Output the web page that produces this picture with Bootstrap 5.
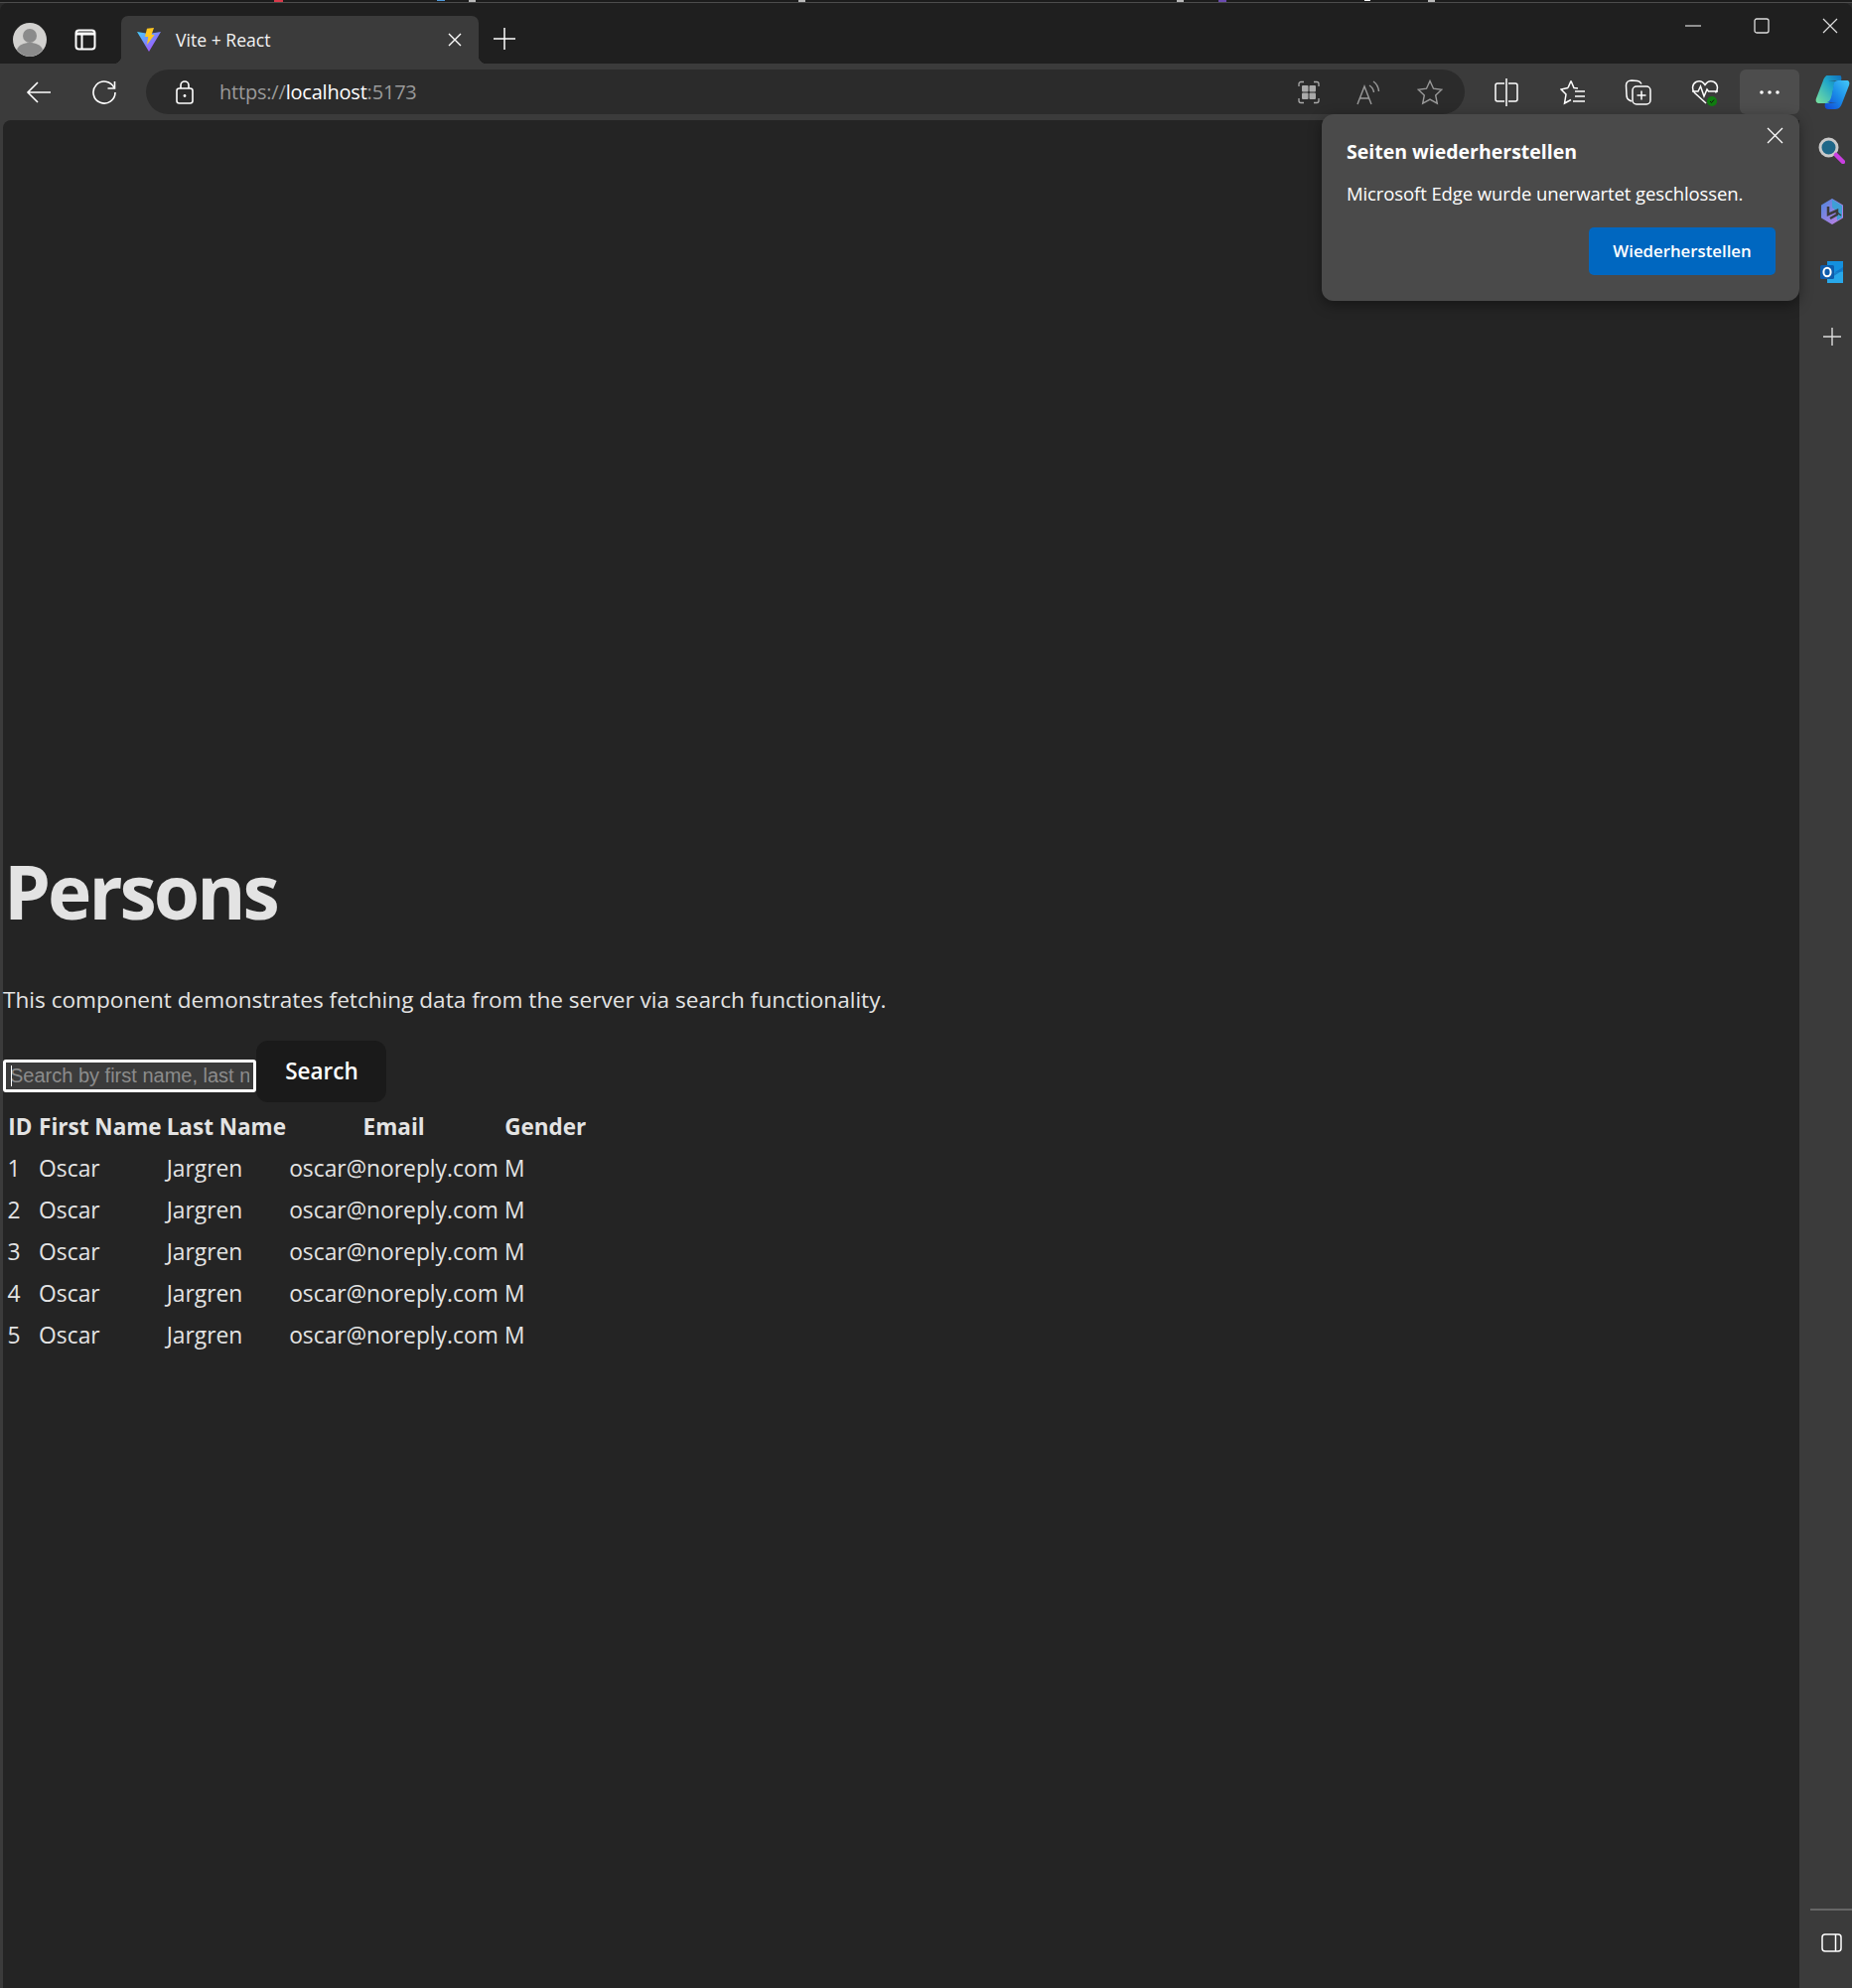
<!DOCTYPE html>
<html lang="en">
<head>
  <meta charset="UTF-8" />
  <title>Vite + React</title>
  <meta name="viewport" content="width=device-width, initial-scale=1">
  <link href="https://cdn.jsdelivr.net/npm/bootstrap@5.3.3/dist/css/bootstrap.min.css" rel="stylesheet">
  <style>
    html, body { height: 100%; background: #2a2a2a; }
    body { font-family: "Open Sans", "Noto Sans", sans-serif; color: #e3e3e3; overflow: hidden; }
    svg { display: block; }

    .win { height: 2002px; }
    .desk-strip { height: 3px; flex: none; background-color: #1c1c1c; background-repeat: no-repeat;
      background-image: linear-gradient(#d8394a, #d8394a), linear-gradient(#4f9bdc, #4f9bdc), linear-gradient(#bbb, #bbb), linear-gradient(#bbb, #bbb), linear-gradient(#bbb, #bbb), linear-gradient(#6b4bb0, #6b4bb0), linear-gradient(#fff, #fff), linear-gradient(#bbb, #bbb), linear-gradient(#4c4c4c, #4c4c4c);
      background-size: 9px 2px, 8px 1px, 7px 2px, 7px 2px, 7px 2px, 8px 2px, 6px 1px, 7px 2px, 100% 1px;
      background-position: 276px 0, 440px 0, 472px 0, 804px 0, 1185px 0, 1227px 0, 1374px 0, 1438px 0, 0 2px; }

    .title-bar { height: 61px; background: #1f1f1f; flex: none; border-radius: 8px 8px 0 0; }
    .title-left { width: 122px; height: 74px; flex: none; }
    .avatar-slot { width: 60px; padding-left: 13px; }
    .tabs-slot { width: 62px; padding-left: 15px; }
    .tab-item { width: 360px; height: 48px; margin-top: 13px; background: #3b3b3b; border-radius: 7px 7px 0 0; position: relative; padding-left: 16px; font-size: 17.6px; color: #f2f2f2; }
    .tab-item::before, .tab-item::after { content: ""; position: absolute; bottom: 0; width: 8px; height: 8px; }
    .tab-item::before { left: -8px; background: radial-gradient(circle at 0 0, #1f1f1f 8px, #3b3b3b 8.5px); }
    .tab-item::after { right: -8px; background: radial-gradient(circle at 100% 0, #1f1f1f 8px, #3b3b3b 8.5px); }
    .tab-name { margin-left: 15px; }
    .tab-x { margin-left: auto; margin-right: 17px; }
    .new-tab { margin-left: 15px; margin-top: 13px; height: 46px; }
    .win-btns { margin-left: auto; height: 46px; padding-right: 14px; gap: 53px; }

    .tool-bar { height: 57px; background: #3b3b3b; flex: none; padding-top: 6px; padding-left: 15px; }
    .tool-btn { width: 48px; height: 45px; flex: none; }
    .tool-btn + .tool-btn { margin-left: 18px; }
    .addr-bar { width: 1328px; height: 45px; margin-left: 18px; background: #2b2b2b; border-radius: 23px; padding: 0 22px 0 30px; flex: none; }
    .addr-text { margin-left: 26px; font-size: 20px; color: #9a9a9a; letter-spacing: -.2px; }
    .addr-text b { font-weight: 400; color: #fff; }
    .addr-icons { margin-left: auto; gap: 37px; }
    .ext-btn { width: 60px; height: 45px; flex: none; margin-left: 6.7px; }
    .ext-first { margin-left: 12px; }
    .more-btn { background: #4d4d4d; border-radius: 6px; margin-left: 5px; }
    .copilot-slot { width: 53px; padding-left: 15px; height: 45px; flex: none; }

    .page-row { min-height: 0; flex: 1 1 auto; background: #3b3b3b; }
    .page-area { margin-left: 3px; background: #242424; border-top-left-radius: 8px; flex: 1 1 auto; padding-top: 734px; min-width: 0; }
    .side-rail { width: 53px; flex: none; background: #3b3b3b; padding-top: 17px; }
    .rail-btn { height: 62px; padding-left: 19px; }
    .rail-shift { padding-left: 21px; }
    .rail-add { padding: 6px 0 0 24px; }
    .rail-foot { margin-top: auto; margin-left: 11px; border-top: 2px solid #666; padding: 23px 0 36px 11px; }

    .page-title { font-size: 75px; line-height: 84px; font-weight: 700; color: #e3e3e3; margin: 0 0 0 1px; letter-spacing: -3px; }
    .page-lead { font-size: 22.6px; line-height: 36px; margin: 50px 0 0; }
    .search-row { margin-top: 23px; height: 62px; }
    .search-wrap { position: relative; width: 255px; margin-top: 19px; }
    .search-wrap::before { content: ""; position: absolute; left: 8px; top: 6px; width: 1px; height: 21px; background: #fff; }
    .search-input { display: block; width: 255px; height: 33px; padding: 0 4px; background: #3b3b3b; border: 3px solid #fff; border-radius: 3px; font: 20px "Liberation Sans", Arial, sans-serif; color: #fff; outline: 0; }
    .search-input::placeholder { color: #8c8c8c; opacity: 1; }
    .search-btn { width: 131px; height: 62px; background: #1a1a1a; color: #fff; border: 0; border-radius: 12px; font-size: 22.5px; font-weight: 600; padding: 0 0 0 1px; }
    .search-btn:hover { background: #1a1a1a; color: #fff; }

    .person-table { border-collapse: separate; border-spacing: 3px; table-layout: fixed; width: 592px; margin-top: 2px; font-size: 22.8px; line-height: 36px; }
    .person-table th, .person-table td { padding: 1.5px; white-space: nowrap; }
    .person-table th { text-align: center; font-weight: 700; font-size: 22.5px; }
    .col-id { width: 28.5px; } .col-first { width: 125px; } .col-last { width: 120px; } .col-mail { width: 213px; } .col-gender { width: 85px; }

    .restore-pop { position: absolute; left: 1331px; top: 115px; width: 481px; height: 188px; background: #4a4a4a; border: 0; border-radius: 12px; box-shadow: 0 4px 14px rgba(0,0,0,.4); color: #fff; padding: 24px 24px 0 25px; }
    .restore-title { font-size: 19.5px; font-weight: 700; line-height: 28px; margin: 0; }
    .restore-text { font-size: 18.5px; line-height: 28px; margin: 14px 0 0; letter-spacing: -.1px; white-space: nowrap; }
    .restore-close { position: absolute; right: 16px; top: 13px; padding: 0; border: 0; background: none; }
    .restore-btn { width: 188px; height: 48px; background: #0067c0; border: 0; border-radius: 5px; color: #fff; font-size: 16.8px; font-weight: 600; padding: 0; }
    .restore-btn:hover { background: #0067c0; color: #fff; }
  </style>
</head>
<body>
  <div class="win d-flex flex-column position-relative">
    <div class="desk-strip"></div>

    <div class="title-bar d-flex">
      <div class="title-left d-flex align-items-center">
        <div class="avatar-slot">
          <svg width="34" height="34" viewBox="0 0 34 34"><circle cx="17" cy="17" r="17" fill="#d2d1cf"/><circle cx="17" cy="13" r="7" fill="#8b8b8b"/><path d="M4 27c2-5 7-7 13-7s11 2 13 7c-3 4-8 7-13 7S7 31 4 27z" fill="#8b8b8b"/></svg>
        </div>
        <div class="tabs-slot">
          <svg width="22" height="22" viewBox="0 0 22 22" fill="none" stroke="#fff" stroke-width="2"><rect x="1.5" y="1.5" width="19" height="19" rx="3"/><path d="M2 3.5h18v3H2z" fill="#fff" stroke="none"/><path d="M7.5 6v14"/></svg>
        </div>
      </div>
      <div class="tab-item d-flex align-items-center">
        <svg width="24" height="24" viewBox="0 0 24 24"><defs><linearGradient id="v1" x1="0" y1="0" x2="1" y2="1"><stop offset="0" stop-color="#41d1ff"/><stop offset="1" stop-color="#bd34fe"/></linearGradient></defs><path d="M0 4l12 2 12-2-12 20z" fill="url(#v1)"/><path d="M10 .8l7-.8-2.4 7h3L10 17l1.2-8H8z" fill="#ffc61f"/></svg>
        <span class="tab-name">Vite + React</span>
        <svg class="tab-x" width="14" height="14" viewBox="0 0 14 14" stroke="#fff" stroke-width="1.4"><path d="M1 1l12 12M13 1L1 13"/></svg>
      </div>
      <div class="new-tab d-flex align-items-center">
        <svg width="22" height="22" viewBox="0 0 22 22" stroke="#fff" stroke-width="1.5"><path d="M11 0v22M0 11h22"/></svg>
      </div>
      <div class="win-btns d-flex align-items-center">
        <svg width="16" height="16" viewBox="0 0 16 16" stroke="#ddd" stroke-width="1.2"><path d="M0 8h16"/></svg>
        <svg width="16" height="16" viewBox="0 0 16 16" fill="none" stroke="#ddd" stroke-width="1.3"><rect x="1" y="1" width="14" height="14" rx="2"/></svg>
        <svg width="16" height="16" viewBox="0 0 16 16" stroke="#ddd" stroke-width="1.2"><path d="M1 1l14 14M15 1L1 15"/></svg>
      </div>
    </div>

    <div class="tool-bar d-flex">
      <div class="tool-btn d-flex align-items-center justify-content-center">
        <svg width="26" height="24" viewBox="0 0 26 24" fill="none" stroke="#fff" stroke-width="1.6"><path d="M25 12H2M12 2L2 12l10 10"/></svg>
      </div>
      <div class="tool-btn d-flex align-items-center justify-content-center">
        <svg width="26" height="26" viewBox="0 0 26 26" fill="none" stroke="#fff" stroke-width="1.6"><path d="M23 8.5A11 11 0 1 0 24 13"/><path d="M23.5 2v7h-7"/></svg>
      </div>
      <div class="addr-bar d-flex align-items-center">
        <svg width="18" height="24" viewBox="0 0 18 24" fill="none" stroke="#fff" stroke-width="1.6"><rect x="1" y="8" width="16" height="15" rx="2.5"/><path d="M5 8V5a4 4 0 0 1 8 0v3"/><circle cx="9" cy="15.5" r="1.4" fill="#fff" stroke="none"/></svg>
        <span class="addr-text">https://<b>localhost</b>:5173</span>
        <div class="addr-icons d-flex align-items-center">
          <svg width="22" height="24" viewBox="0 0 22 24" fill="none" stroke="#aaa" stroke-width="1.3"><path d="M1 6V3.500A2 2 0 0 1 3 1.500h3M16 1.500h3a2 2 0 0 1 2 2V6M1 18v2.500a2 2 0 0 0 2 2h3M16 22.500h3a2 2 0 0 0 2-2V18"/><g fill="#aaa" stroke="none"><rect x="4" y="5" width="6.500" height="6.500" rx="1"/><rect x="11.500" y="5" width="6.500" height="6.500" rx="1"/><rect x="4" y="12.500" width="6.500" height="6.500" rx="1"/><rect x="11.500" y="12.500" width="6.500" height="6.500" rx="1"/></g></svg>
          <svg width="24" height="26" viewBox="0 0 24 26" fill="none" stroke="#9a9a9a" stroke-width="1.4"><path d="M1 25L8 7l7 18M3.500 19h9"/><path d="M13 6c2.500 1.500 4 3.500 4.500 7M17 2c3 2 5 5 5.500 10"/></svg>
          <svg width="26" height="26" viewBox="0 0 26 26" fill="none" stroke="#9a9a9a" stroke-width="1.4"><path d="M13 1.500l3.500 7.700 8.300 1-6.100 5.700 1.600 8.300-7.300-4.100-7.300 4.100 1.600-8.300-6.100-5.700 8.300-1z"/></svg>
        </div>
      </div>
      <div class="ext-btn ext-first d-flex align-items-center justify-content-center">
        <svg width="24" height="28" viewBox="0 0 24 28" fill="none" stroke="#fff" stroke-width="1.5"><path d="M12 0v28M10 5H3a2 2 0 0 0-2 2v14a2 2 0 0 0 2 2h7M14 5h7a2 2 0 0 1 2 2v14a2 2 0 0 1-2 2h-7"/></svg>
      </div>
      <div class="ext-btn d-flex align-items-center justify-content-center">
        <svg width="26" height="26" viewBox="0 0 26 26" fill="none" stroke="#fff" stroke-width="1.5"><path d="M11 1.500l3 7 4 .5M8 8.500L1 10l5 5-1.500 9 6.500-3.500"/><path d="M11 1.500L8 8.500"/><path d="M15 12h10M15 17h10M13 22h12"/></svg>
      </div>
      <div class="ext-btn d-flex align-items-center justify-content-center">
        <svg width="28" height="28" viewBox="0 0 28 28" fill="none" stroke="#fff" stroke-width="1.5"><path d="M7 23l-2-1c-2-1-3-3-3-5L1.500 7C1.500 4 4 2 7 2l6 .5c2 .2 3 1 4 3"/><rect x="8" y="8" width="18" height="18" rx="4"/><path d="M17 12.500v9M12.500 17h9"/></svg>
      </div>
      <div class="ext-btn d-flex align-items-center justify-content-center">
        <svg width="28" height="28" viewBox="0 0 28 28"><path d="M15 25L3.500 14.500C.5 11 1 5.500 5 3.500c3.500-1.700 7 0 9 3 2-3 5.500-4.700 9-3 4 2 4.500 7.500 1.500 11" fill="none" stroke="#fff" stroke-width="1.5"/><path d="M1 13h6l2.500-5 3.500 10 3-7 1.500 2H27" fill="none" stroke="#fff" stroke-width="1.500"/><circle cx="21" cy="23" r="5" fill="#107c10"/><path d="M19 23l1.500 1.500 2.500-3" fill="none" stroke="#111" stroke-width="1"/></svg>
      </div>
      <div class="ext-btn more-btn d-flex align-items-center justify-content-center">
        <svg width="22" height="6" viewBox="0 0 22 6" fill="#fff"><circle cx="3" cy="3" r="1.800"/><circle cx="11" cy="3" r="1.800"/><circle cx="19" cy="3" r="1.800"/></svg>
      </div>
      <div class="copilot-slot d-flex align-items-center">
        <svg width="36" height="34" viewBox="0 0 36 34"><defs><linearGradient id="c1" x1="0" y1="1" x2="1" y2="0"><stop offset="0" stop-color="#7be29d"/><stop offset=".6" stop-color="#1fa6c9"/><stop offset="1" stop-color="#0f6cbd"/></linearGradient><linearGradient id="c2" x1="0" y1="1" x2="1" y2="0"><stop offset="0" stop-color="#1146d6"/><stop offset=".5" stop-color="#1a8ce8"/><stop offset="1" stop-color="#45c9f7"/></linearGradient></defs><path d="M13 7h10c-3 1-4 4-5 9l-2 10c-.6 2-2 3-4 3H3.500C1 29 0 27 1 24L8 6c1-3 3-6 7-6h8c3 0 4 3 3 6z" fill="url(#c1)" transform="translate(1 -1)"/><path d="M23 27H13c3-1 4-4 5-9l2-10c.6-2 2-3 4-3h8.500c2.500 0 3.500 2 2.500 5l-7 18c-1 3-3 6-7 6h-7c-3 0-4-3-3-6z" fill="url(#c2)"/></svg>
      </div>
    </div>

    <div class="page-row d-flex">
      <main class="page-area">
        <h1 class="page-title">Persons</h1>
        <p class="page-lead">This component demonstrates fetching data from the server via search functionality.</p>
        <div class="search-row d-flex align-items-start">
          <div class="search-wrap">
            <input class="search-input" type="text" placeholder="Search by first name, last name or email">
          </div>
          <button class="btn search-btn" type="button">Search</button>
        </div>
        <table class="person-table">
          <colgroup><col class="col-id"><col class="col-first"><col class="col-last"><col class="col-mail"><col class="col-gender"></colgroup>
          <thead>
            <tr><th>ID</th><th>First Name</th><th>Last Name</th><th>Email</th><th>Gender</th></tr>
          </thead>
          <tbody>
            <tr><td>1</td><td>Oscar</td><td>Jargren</td><td>oscar@noreply.com</td><td>M</td></tr>
            <tr><td>2</td><td>Oscar</td><td>Jargren</td><td>oscar@noreply.com</td><td>M</td></tr>
            <tr><td>3</td><td>Oscar</td><td>Jargren</td><td>oscar@noreply.com</td><td>M</td></tr>
            <tr><td>4</td><td>Oscar</td><td>Jargren</td><td>oscar@noreply.com</td><td>M</td></tr>
            <tr><td>5</td><td>Oscar</td><td>Jargren</td><td>oscar@noreply.com</td><td>M</td></tr>
          </tbody>
        </table>
      </main>
      <aside class="side-rail d-flex flex-column">
        <div class="rail-btn">
          <svg width="27" height="27" viewBox="0 0 27 27"><circle cx="10.500" cy="10.500" r="8.500" fill="#1f6788" stroke="#c9c9c9" stroke-width="3"/><path d="M18 18l7 7" stroke="#c93fe0" stroke-width="4.500" stroke-linecap="round"/></svg>
        </div>
        <div class="rail-btn rail-shift">
          <svg width="24" height="26" viewBox="0 0 24 26"><defs><linearGradient id="b1" x1="0" y1="0" x2="1" y2="1"><stop offset="0" stop-color="#4f86df"/><stop offset="1" stop-color="#c680e4"/></linearGradient></defs><path d="M12 1l10 6v12l-10 6L2 19V7z" fill="url(#b1)" stroke="url(#b1)" stroke-linejoin="round" stroke-width="2"/><path d="M12 1l10 6v12l-5 3-1-10-4-3z" fill="#3f9fd6"/><path d="M8 8v8l9-4v4l-7 4" fill="none" stroke="#3b3b3b" stroke-width="2.500"/><path d="M16 13l5 4" stroke="#3b3b3b" stroke-width="1.500"/></svg>
        </div>
        <div class="rail-btn rail-shift">
          <svg width="24" height="24" viewBox="0 0 24 24"><path d="M7 1h16v14H7z" fill="#1490df"/><path d="M7 12l16 0v11H7z" fill="#28a8ea"/><path d="M12 14l11-7v3l-11 7z" fill="#0f6cbd" opacity=".7"/><rect x="0" y="5" width="14" height="14" rx="1.500" fill="#0f5cab"/><ellipse cx="7" cy="12" rx="3.600" ry="4.300" fill="none" stroke="#fff" stroke-width="2"/></svg>
        </div>
        <div class="rail-btn rail-add">
          <svg width="18" height="18" viewBox="0 0 18 18" stroke="#ddd" stroke-width="1.400"><path d="M9 0v18M0 9h18"/></svg>
        </div>
        <div class="rail-foot">
          <svg width="21" height="19" viewBox="0 0 21 19" fill="none" stroke="#fff" stroke-width="1.500"><rect x="1" y="1" width="19" height="17" rx="3"/><path d="M14.500 1v17"/></svg>
        </div>
      </aside>
    </div>

    <div class="card restore-pop">
      <button class="restore-close" type="button" aria-label="Schließen">
        <svg width="17" height="17" viewBox="0 0 17 17" stroke="#fff" stroke-width="1.300"><path d="M1 1l15 15M16 1L1 16"/></svg>
      </button>
      <h5 class="restore-title">Seiten wiederherstellen</h5>
      <p class="restore-text">Microsoft Edge wurde unerwartet geschlossen.</p>
      <div class="d-flex justify-content-end pt-3 mt-1">
        <button class="btn restore-btn" type="button">Wiederherstellen</button>
      </div>
    </div>
  </div>
</body>
</html>
